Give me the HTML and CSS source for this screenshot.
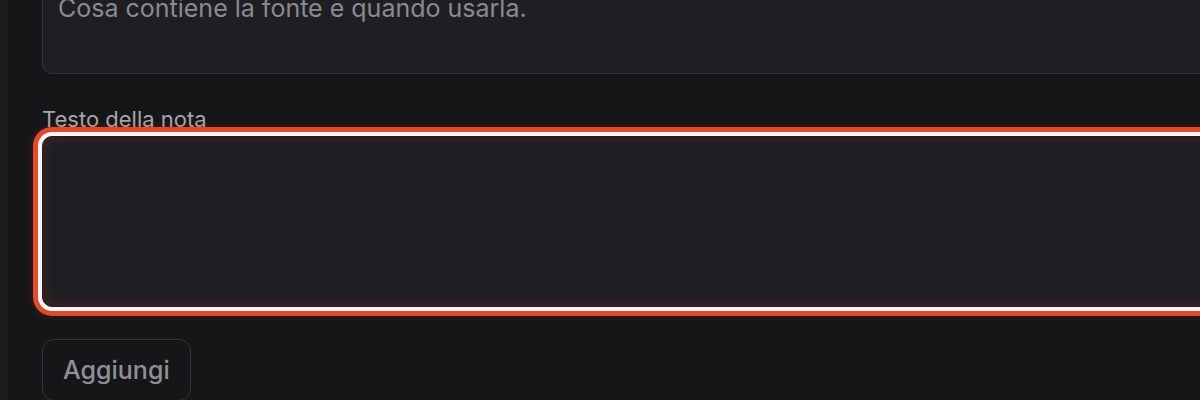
FILE: index.html
```html
<!DOCTYPE html>
<html lang="it">
<head>
<meta charset="utf-8">
<title>Nota</title>
<link rel="stylesheet" href="styles.css">
</head>
<body>
<div class="app">
  <aside class="rail"></aside>
  <main class="main">
    <form class="form">
      <textarea class="field field-desc" placeholder="Cosa contiene la fonte e quando usarla."></textarea>
      <label class="label" for="nota">Testo della nota</label>
      <textarea id="nota" class="field field-note focused"></textarea>
      <div class="actions">
        <button type="button" class="btn">Aggiungi</button>
      </div>
    </form>
  </main>
</div>
</body>
</html>
```
FILE: styles.css
```css
* { box-sizing: border-box; }
html, body {
  margin: 0;
  padding: 0;
  height: 100%;
  background: #161618;
  overflow: hidden;
}
body {
  font-family: Inter, "Liberation Sans", sans-serif;
}
.app {
  display: flex;
  height: 100%;
}
.rail {
  width: 8px;
  flex: none;
  background: #1c1c1f;
}
.main {
  flex: 1;
  padding-left: 34px;
  min-width: 0;
  overflow: hidden;
}
.form {
  display: flex;
  flex-direction: column;
  margin-top: -25px;
  width: 1240px;
}
.field {
  display: block;
  width: 100%;
  resize: none;
  background: #1f1f23;
  border: 1px solid #323237;
  border-radius: 10px;
  color: #d0d0d4;
  font-family: inherit;
  font-size: 25px;
  line-height: 36px;
  padding: 14px 15px;
  outline: none;
}
.field::placeholder {
  color: #8a8a90;
}
.field-desc {
  height: 99px;
}
.label {
  margin-top: 31px;
  font-size: 22px;
  line-height: 28px;
  color: #a6a6ac;
}
.field-note {
  margin-top: 3px;
  height: 171px;
}
.focused {
  border-color: #2a1c1c;
  box-shadow:
    inset 0 0 14px rgba(200, 60, 40, 0.22),
    0 0 0 4px #f7f5f4,
    0 0 0 9px #e24a2e,
    0 0 8px 9px rgba(200, 50, 30, 0.25);
}
.actions {
  margin-top: 32px;
}
.btn {
  height: 62px;
  padding: 0 20px;
  background: transparent;
  border: 1px solid #333338;
  border-radius: 12px;
  color: #8f8f96;
  font-family: inherit;
  font-size: 25px;
  font-weight: 500;
}
```
